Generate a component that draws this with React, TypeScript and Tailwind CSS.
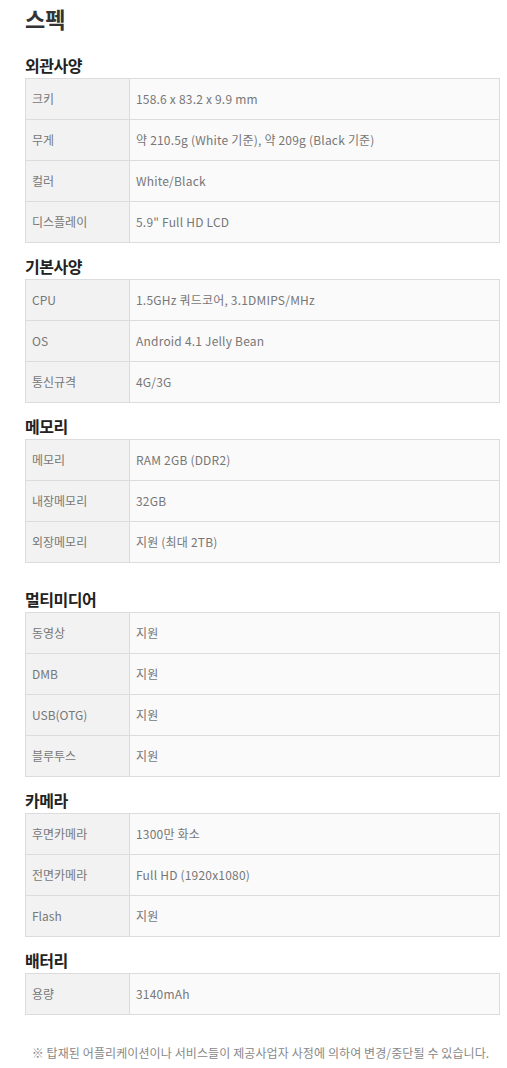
import React from "react";

type Row = [string, string];
type Section = { title: string; rows: Row[]; mt: string };

const sections: Section[] = [
  {
    title: "외관사양",
    mt: "mt-[17px]",
    rows: [
      ["크키", "158.6 x 83.2 x 9.9 mm"],
      ["무게", "약 210.5g (White 기준), 약 209g (Black 기준)"],
      ["컬러", "White/Black"],
      ["디스플레이", "5.9\" Full HD LCD"],
    ],
  },
  {
    title: "기본사양",
    mt: "mt-[11px]",
    rows: [
      ["CPU", "1.5GHz 쿼드코어, 3.1DMIPS/MHz"],
      ["OS", "Android 4.1 Jelly Bean"],
      ["통신규격", "4G/3G"],
    ],
  },
  {
    title: "메모리",
    mt: "mt-[11px]",
    rows: [
      ["메모리", "RAM 2GB (DDR2)"],
      ["내장메모리", "32GB"],
      ["외장메모리", "지원 (최대 2TB)"],
    ],
  },
  {
    title: "멀티미디어",
    mt: "mt-[24px]",
    rows: [
      ["동영상", "지원"],
      ["DMB", "지원"],
      ["USB(OTG)", "지원"],
      ["블루투스", "지원"],
    ],
  },
  {
    title: "카메라",
    mt: "mt-[11px]",
    rows: [
      ["후면카메라", "1300만 화소"],
      ["전면카메라", "Full HD (1920x1080)"],
      ["Flash", "지원"],
    ],
  },
  {
    title: "배터리",
    mt: "mt-[11px]",
    rows: [["용량", "3140mAh"]],
  },
];

export default function App() {
  return (
    <div
      className="w-[507px] min-h-[1068px] bg-white pl-[25px] pr-[7px]"
      style={{ fontFamily: '"Noto Sans CJK KR", "Noto Sans", sans-serif' }}
    >
      <h1 className="text-[22px] leading-[36px] font-bold text-[#333]">스펙</h1>
      {sections.map((s) => (
        <div key={s.title} className={s.mt}>
          <h2 className="text-[16px] leading-[25px] font-bold text-[#222] tracking-[-0.5px]">
            {s.title}
          </h2>
          <div className="border border-[#dcdcdc]">
            {s.rows.map(([k, v], i) => (
              <div
                key={k}
                className={`flex box-content h-[40px] ${i < s.rows.length - 1 ? "border-b border-[#dcdcdc]" : ""}`}
              >
                <div className="w-[104px] shrink-0 bg-[#f2f2f2] border-r border-[#dcdcdc] pl-[6px] flex items-center text-[12px] text-[#777]">
                  {k}
                </div>
                <div className="flex-1 bg-[#fafafa] pl-[6px] flex items-center text-[12px] text-[#777] tracking-[0.2px]">
                  {v}
                </div>
              </div>
            ))}
          </div>
        </div>
      ))}
      <p className="mt-[29px] text-center text-[12px] leading-[18px] text-[#888] pr-[4px] tracking-[0.1px]">
        ※ 탑재된 어플리케이션이나 서비스들이 제공사업자 사정에 의하여 변경/중단될 수 있습니다.
      </p>
    </div>
  );
}
